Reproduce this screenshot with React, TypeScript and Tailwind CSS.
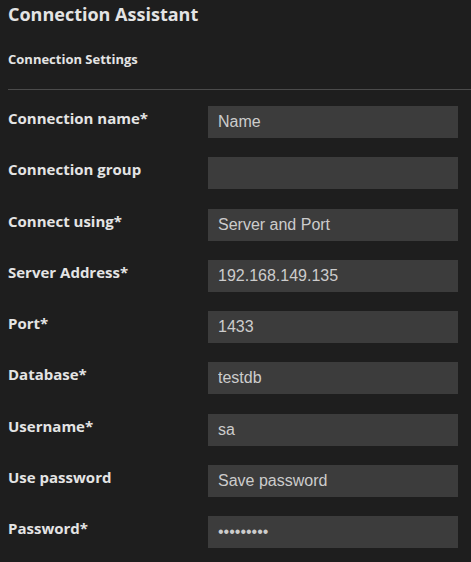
import React from 'react';

const fields = [
  { label: 'Connection name*', value: 'Name' },
  { label: 'Connection group', value: '' },
  { label: 'Connect using*', value: 'Server and Port' },
  { label: 'Server Address*', value: '192.168.149.135' },
  { label: 'Port*', value: '1433' },
  { label: 'Database*', value: 'testdb' },
  { label: 'Username*', value: 'sa' },
  { label: 'Use password', value: 'Save password' },
  { label: 'Password*', value: 'password1', secret: true },
];

function App() {
  return (
    <div className="min-h-[562px] bg-[#1e1e1e] pl-2 font-['Open_Sans',sans-serif] text-[#e4e4e4]">
      <h1 className="text-[18px] font-bold leading-[28px]">Connection Assistant</h1>
      <h2 className="mt-[22px] text-[13px] font-bold leading-[18px]">Connection Settings</h2>
      <div className="mt-[21px] h-px bg-[#4b4b4b]" />

      {/* form rows */}
      <div className="mt-[16px] flex flex-col gap-[19.25px] pr-[13px]">
        {fields.map((f) => (
          <div key={f.label} className="flex h-[32px]">
            <label className="flex-1 pt-[2px] text-[15px] font-bold leading-[20px]">{f.label}</label>
            <input
              readOnly
              type={f.secret ? 'password' : 'text'}
              value={f.value}
              className="h-[32px] w-[250px] bg-[#3c3c3c] px-[10px] font-['Liberation_Sans',sans-serif] text-[16px] text-[#cccccc] outline-none"
            />
          </div>
        ))}
      </div>
    </div>
  );
}

export default App;
